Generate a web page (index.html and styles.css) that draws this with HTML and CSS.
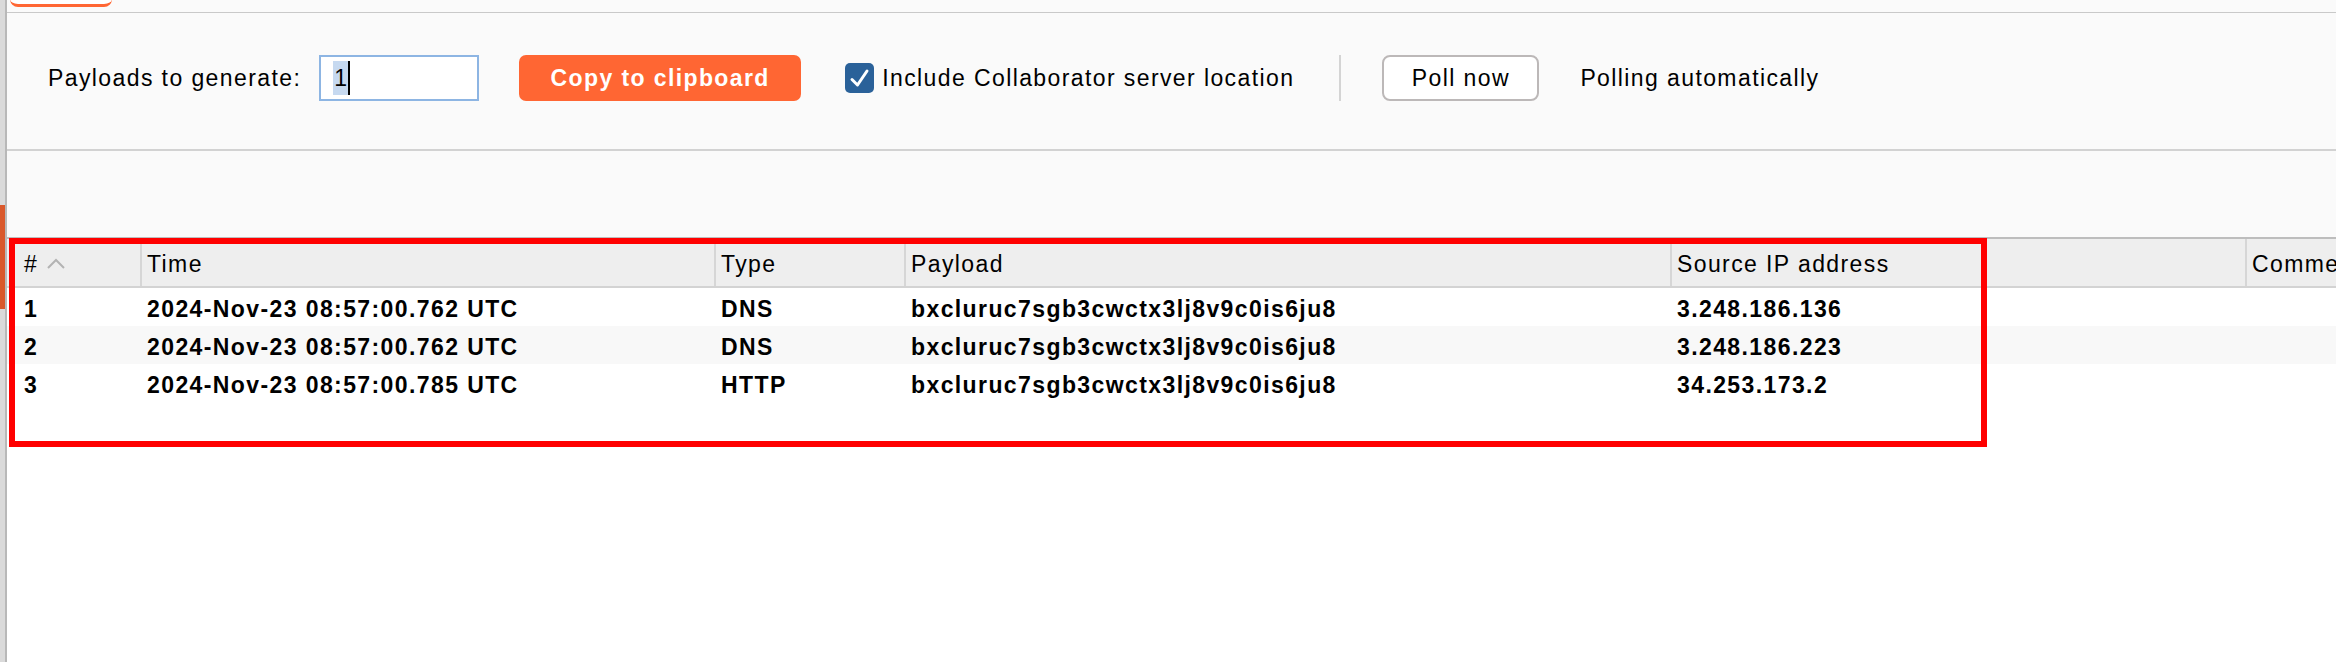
FILE: index.html
```html
<!DOCTYPE html>
<html lang="en">
<head>
<meta charset="utf-8">
<title>Collaborator</title>
<link rel="stylesheet" href="styles.css">
</head>
<body>
<div class="page">
  <div class="gutter"><div class="gutter-mark"></div></div>
  <div class="main">
    <div class="tabstrip"><div class="tab"></div></div>
    <div class="toolbar">
      <span class="label">Payloads to generate:</span>
      <div class="field"><span class="sel">1</span><span class="caret"></span></div>
      <button class="btn-primary">Copy to clipboard</button>
      <span class="check">
        <svg width="29" height="30" viewBox="0 0 29 30"><polyline points="7,16.5 12.5,22 22,8" fill="none" stroke="#fff" stroke-width="3" stroke-linecap="round" stroke-linejoin="round"/></svg>
      </span>
      <span class="check-label">Include Collaborator server location</span>
      <span class="sep"></span>
      <button class="btn">Poll now</button>
      <span class="status">Polling automatically</span>
    </div>
    <div class="spacer"></div>
    <div class="table">
      <div class="thead">
        <div class="th first"># <svg class="sort" width="20" height="12" viewBox="0 0 20 12"><polyline points="2,11 10,3 18,11" fill="none" stroke="#b3b3b3" stroke-width="2"/></svg></div>
        <div class="th">Time</div>
        <div class="th">Type</div>
        <div class="th">Payload</div>
        <div class="th">Source IP address</div>
        <div class="th">Comment</div>
      </div>
      <div class="tr">
        <div class="td first">1</div>
        <div class="td">2024-Nov-23 08:57:00.762 UTC</div>
        <div class="td">DNS</div>
        <div class="td">bxcluruc7sgb3cwctx3lj8v9c0is6ju8</div>
        <div class="td">3.248.186.136</div>
        <div class="td"></div>
      </div>
      <div class="tr alt">
        <div class="td first">2</div>
        <div class="td">2024-Nov-23 08:57:00.762 UTC</div>
        <div class="td">DNS</div>
        <div class="td">bxcluruc7sgb3cwctx3lj8v9c0is6ju8</div>
        <div class="td">3.248.186.223</div>
        <div class="td"></div>
      </div>
      <div class="tr">
        <div class="td first">3</div>
        <div class="td">2024-Nov-23 08:57:00.785 UTC</div>
        <div class="td">HTTP</div>
        <div class="td">bxcluruc7sgb3cwctx3lj8v9c0is6ju8</div>
        <div class="td">34.253.173.2</div>
        <div class="td"></div>
      </div>
    </div>
  </div>
  <div class="highlight"></div>
</div>
</body>
</html>
```
FILE: styles.css
```css
* { box-sizing: border-box; }
html, body { margin: 0; padding: 0; }
body {
  width: 2336px;
  height: 662px;
  overflow: hidden;
  background: #fafafa;
  font-family: "Liberation Sans", Arial, Helvetica, sans-serif;
  font-size: 23px;
  letter-spacing: 1.4px;
  color: #000;
}
.page {
  position: relative;
  display: flex;
  height: 662px;
}
.gutter {
  width: 7px;
  flex: none;
  background: #dadada;
  border-right: 2px solid #b8b8b8;
}
.gutter-mark {
  margin-top: 205px;
  height: 104px;
  background: #d9582b;
}
.main {
  flex: 1;
  display: flex;
  flex-direction: column;
  min-width: 0;
}
.tabstrip {
  height: 13px;
  background: #fafafa;
  border-bottom: 1px solid #c9c9c9;
  padding-left: 3px;
}
.tab {
  width: 102px;
  height: 8px;
  background: #fff;
  border-bottom: 3px solid #ff6633;
  border-radius: 0 0 9px 9px;
  margin-top: -1px;
}
.toolbar {
  height: 138px;
  display: flex;
  align-items: center;
  padding: 0 0 6px 41px;
  border-bottom: 2px solid #d2d2d2;
  background: #fafafa;
}
.label { margin-right: 18px; }
.field {
  width: 160px;
  height: 46px;
  background: #fff;
  border: 2px solid #8db5e3;
  display: flex;
  align-items: center;
  padding-left: 12px;
}
.sel {
  background: #c6d9f0;
  line-height: 34px;
  padding: 0 1px;
  letter-spacing: 0;
}
.caret {
  width: 2px;
  height: 34px;
  background: #000;
}
.btn-primary {
  margin-left: 40px;
  width: 282px;
  height: 46px;
  border: none;
  border-radius: 7px;
  background: #ff6633;
  color: #fff;
  font: bold 23px "Liberation Sans", Arial, sans-serif;
  letter-spacing: 1.4px;
  padding: 0;
}
.check {
  margin-left: 44px;
  width: 29px;
  height: 30px;
  border-radius: 5px;
  background: #2a6199;
  display: flex;
}
.check-label { margin-left: 8px; }
.sep {
  margin-left: 45px;
  width: 2px;
  height: 46px;
  background: #d4d4d4;
}
.btn {
  margin-left: 41px;
  width: 157px;
  height: 46px;
  border: 2px solid #bcb8b8;
  border-radius: 8px;
  background: #fff;
  color: #000;
  font: 23px "Liberation Sans", Arial, sans-serif;
  letter-spacing: 1.4px;
  padding: 0;
}
.status { margin-left: 41px; }
.spacer {
  height: 86px;
  background: #fafafa;
}
.table {
  flex: 1;
  background: #fff;
}
.thead, .tr {
  display: grid;
  grid-template-columns: 133px 574px 190px 766px 575px 1fr;
}
.thead {
  height: 51px;
  background: #eeeeee;
  border-top: 2px solid #bdbdbd;
  border-bottom: 2px solid #d3d3d3;
}
.th {
  display: flex;
  align-items: center;
  padding: 4px 0 0 5px;
  border-left: 2px solid #d6d6d6;
  white-space: nowrap;
  overflow: hidden;
}
.th.first, .td.first {
  border-left: none;
  padding-left: 17px;
}
.sort { margin-left: 8px; margin-top: -4px; }
.tr {
  height: 38px;
  font-weight: bold;
}
.tr.alt { background: #f8f8f8; }
.td {
  display: flex;
  align-items: center;
  padding: 4px 0 0 7px;
  white-space: nowrap;
}
.highlight {
  position: absolute;
  left: 9px;
  top: 238px;
  width: 1978px;
  height: 209px;
  border: 6px solid #ff0000;
  pointer-events: none;
}
```
